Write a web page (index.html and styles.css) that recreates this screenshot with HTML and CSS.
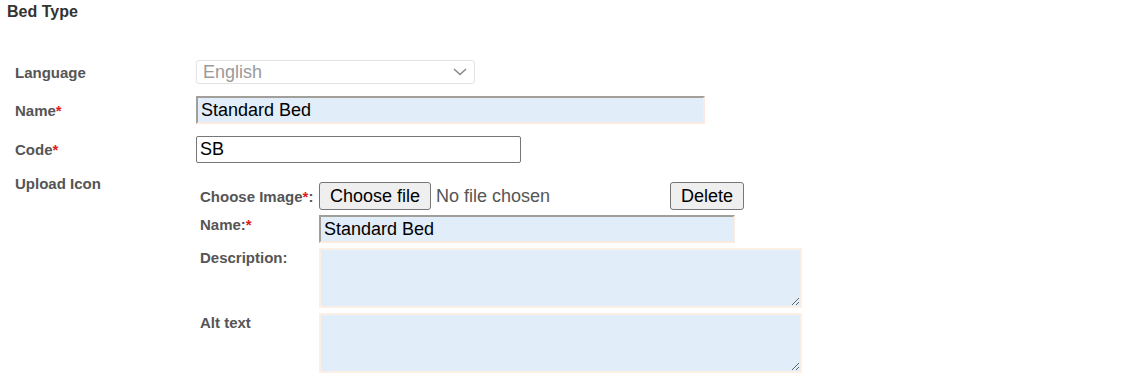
FILE: index.html
```html
<!DOCTYPE html>
<html lang="en">
<head>
<meta charset="UTF-8" />
<title>Bed Type</title>
<link rel="stylesheet" href="styles.css">
</head>
<body>
<h1 class="title">Bed Type</h1>

<form class="form">
  <label class="lbl">Language</label>
  <div class="field">
    <div class="select">
      <span>English</span>
      <svg width="14" height="8" viewBox="0 0 14 8"><path d="M1 1l6 5.5L13 1" fill="none" stroke="#8a8a8a" stroke-width="1.6"/></svg>
    </div>
  </div>

  <label class="lbl">Name<span class="req">*</span></label>
  <div class="field"><input class="txt shaded wide" value="Standard Bed"></div>

  <label class="lbl">Code<span class="req">*</span></label>
  <div class="field"><input class="txt plain" value="SB"></div>

  <label class="lbl lbl-top">Upload Icon</label>
  <div class="upload">
    <label class="sub-lbl mid">Choose Image<span class="req">*</span>:</label>
    <div class="file-row">
      <div class="file">
        <button type="button" class="btn">Choose file</button>
        <span class="nofile">No file chosen</span>
      </div>
      <button type="button" class="btn">Delete</button>
    </div>

    <label class="sub-lbl">Name:<span class="req">*</span></label>
    <input class="txt shaded sub-name" value="Standard Bed">

    <label class="sub-lbl">Description:</label>
    <textarea class="area"></textarea>

    <label class="sub-lbl">Alt text</label>
    <textarea class="area"></textarea>
  </div>
</form>
</body>
</html>
```

FILE: styles.css
```css
html, body {
  margin: 0;
  padding: 0;
  background: #fff;
  font-family: "Liberation Sans", Arial, sans-serif;
}

.title {
  margin: 0;
  padding: 3px 7px 0;
  font-size: 16px;
  line-height: 18px;
  font-weight: bold;
  color: #333;
}

.form {
  display: grid;
  grid-template-columns: 181px auto;
  align-items: center;
  row-gap: 12px;
  margin: 39px 0 0 15px;
}

.lbl {
  font-size: 15px;
  line-height: 17px;
  font-weight: bold;
  color: #555;
}

.lbl-top {
  align-self: start;
}

.req {
  color: #e21b1b;
}

.field {
  display: flex;
}

.select {
  box-sizing: border-box;
  width: 279px;
  height: 24px;
  border: 1px solid #e3e3e3;
  border-radius: 3px;
  display: flex;
  align-items: center;
  justify-content: space-between;
  padding: 0 7px 0 6px;
  font-size: 18px;
  color: #9a9a9a;
}

.txt {
  box-sizing: border-box;
  font-family: "Liberation Sans", Arial, sans-serif;
  font-size: 18px;
  color: #000;
  outline: none;
}

.shaded {
  height: 28px;
  background: #e1edf8;
  border: 2px solid;
  border-color: #a29e9a #fbeadf #fbeadf #a29e9a;
  padding: 0 3px;
}

.wide {
  width: 509px;
}

.plain {
  width: 325px;
  height: 27px;
  border: 1px solid #767676;
  border-radius: 2px;
  background: #fff;
  padding: 0 3px;
}

.upload {
  display: grid;
  grid-template-columns: 119px auto;
  row-gap: 5px;
  margin: 7px 0 0 4px;
  align-self: start;
}

.sub-lbl {
  font-size: 15px;
  line-height: 17px;
  font-weight: bold;
  color: #555;
  padding-top: 1px;
}

.sub-lbl.mid {
  align-self: center;
  padding-top: 0;
}

.file-row {
  display: flex;
  align-items: center;
}

.file {
  width: 351px;
  display: flex;
  align-items: center;
  gap: 5px;
}

.btn {
  height: 28px;
  font-family: "Liberation Sans", Arial, sans-serif;
  font-size: 18px;
  color: #000;
  background: #efefef;
  border: 1px solid #767676;
  border-radius: 3px;
  padding: 0 10px;
}

.nofile {
  font-size: 18px;
  color: #555;
}

.sub-name {
  width: 416px;
}

.area {
  box-sizing: border-box;
  width: 483px;
  height: 60px;
  background: #e1edf8;
  border: 2px solid #fcefe6;
  resize: both;
  font-family: "Liberation Sans", Arial, sans-serif;
}
```
